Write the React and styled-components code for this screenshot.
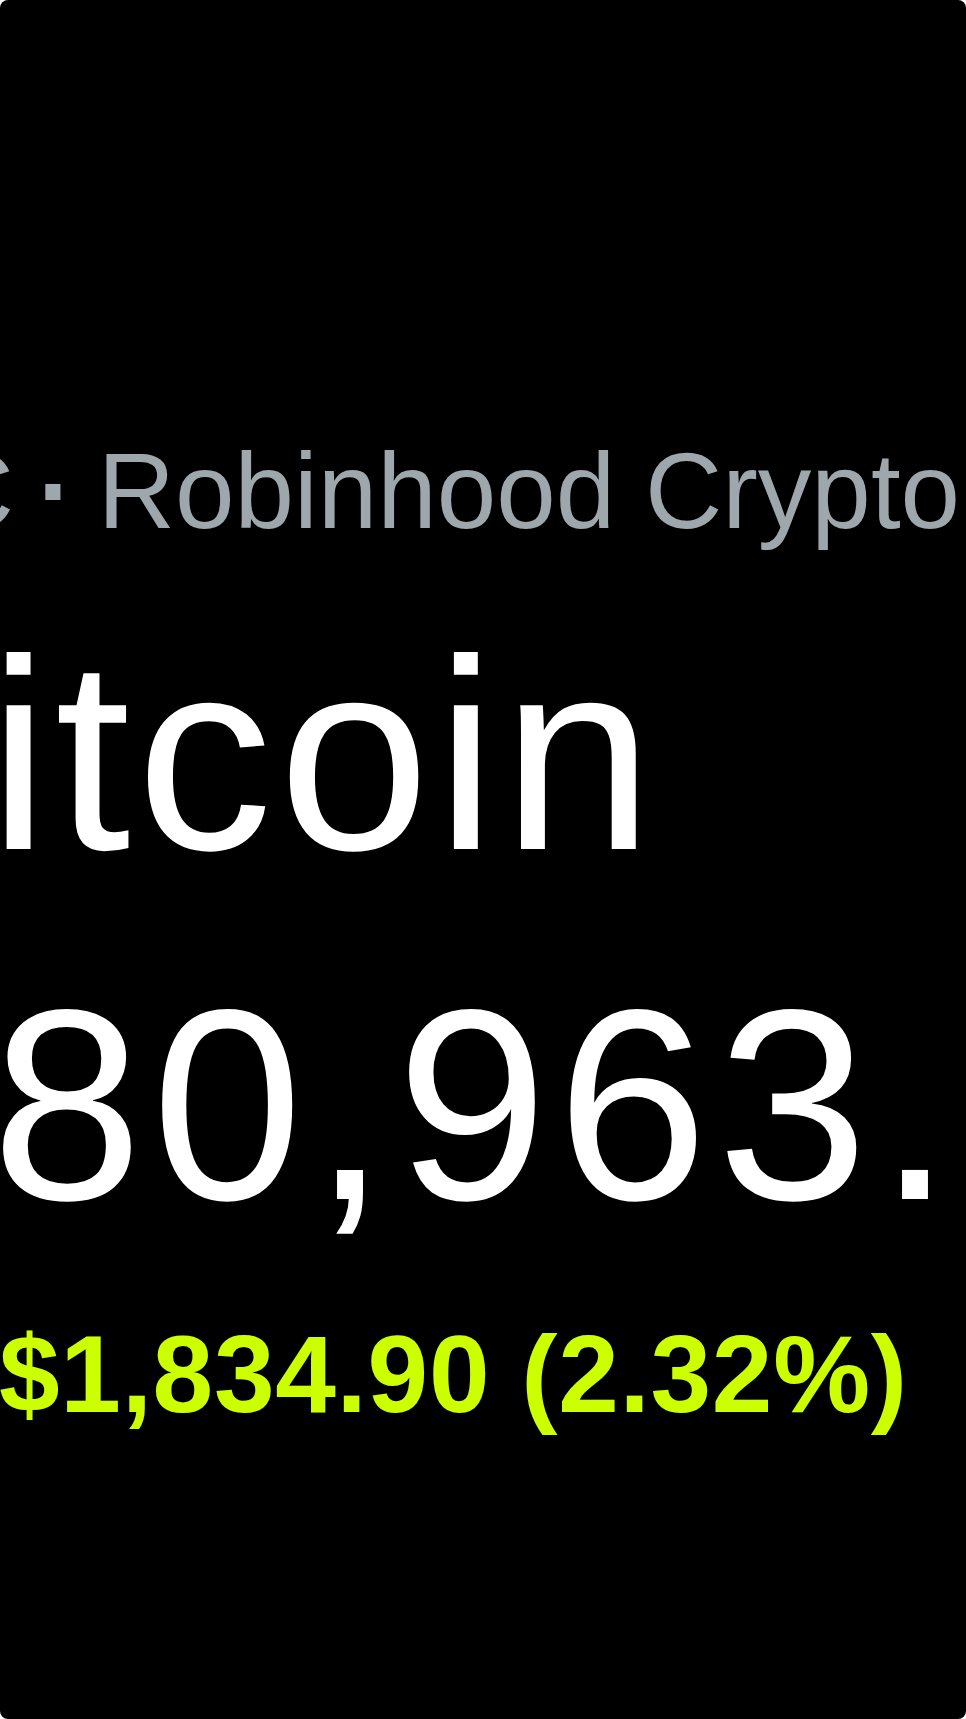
import React from "react";
import styled, { createGlobalStyle } from "styled-components";

const GlobalStyle = createGlobalStyle`
  html, body {
    margin: 0;
    padding: 0;
    background: #ffffff;
    overflow: hidden;
  }
`;

const Card = styled.div`
  width: 966px;
  height: 1719px;
  background: #000000;
  border-radius: 8px;
  overflow: hidden;
  font-family: "Liberation Sans", Arial, sans-serif;
  white-space: nowrap;
`;

const Stack = styled.div`
  display: flex;
  flex-direction: column;
  align-items: flex-start;
  padding-top: 427px;
  margin-left: -199px;
`;

const Eyebrow = styled.div`
  display: flex;
  align-items: baseline;
  gap: 24px;
  margin-left: ${(p) => p.indent || 0}px;
  font-size: 107px;
  line-height: 128px;
  color: #9ea7ac;
`;

const Dot = styled.span`
  font-weight: 700;
`;

const Title = styled.h1`
  margin: 50px 0 0;
  font-size: 272px;
  line-height: 300px;
  font-weight: 400;
  letter-spacing: 6px;
  color: #ffffff;
`;

const Price = styled.div`
  margin-top: 50px;
  margin-left: ${(p) => p.indent || 0}px;
  font-size: 272px;
  line-height: 300px;
  letter-spacing: 9px;
  color: #ffffff;
`;

const Change = styled.div`
  display: flex;
  align-items: center;
  gap: 48px;
  margin-top: 54px;
  font-size: 109px;
  line-height: 130px;
  font-weight: 700;
  letter-spacing: 0.7px;
  color: #ccff00;
`;

const Arrow = () => (
  <svg width="150" height="90" viewBox="0 0 150 90" aria-hidden="true">
    <path d="M75 0 L150 90 L0 90 Z" fill="#ccff00" />
  </svg>
);

const App = () => {
  return (
    <>
      <GlobalStyle />
      <Card>
        <Stack>
          <Eyebrow indent={-1}>
            <span>BTC</span>
            <Dot>·</Dot>
            <span>Robinhood Crypto</span>
          </Eyebrow>
          <Title>Bitcoin</Title>
          <Price indent={30}>$80,963.22</Price>
          <Change>
            <Arrow />
            <span>$1,834.90 (2.32%)</span>
          </Change>
        </Stack>
      </Card>
    </>
  );
};

export default App;
